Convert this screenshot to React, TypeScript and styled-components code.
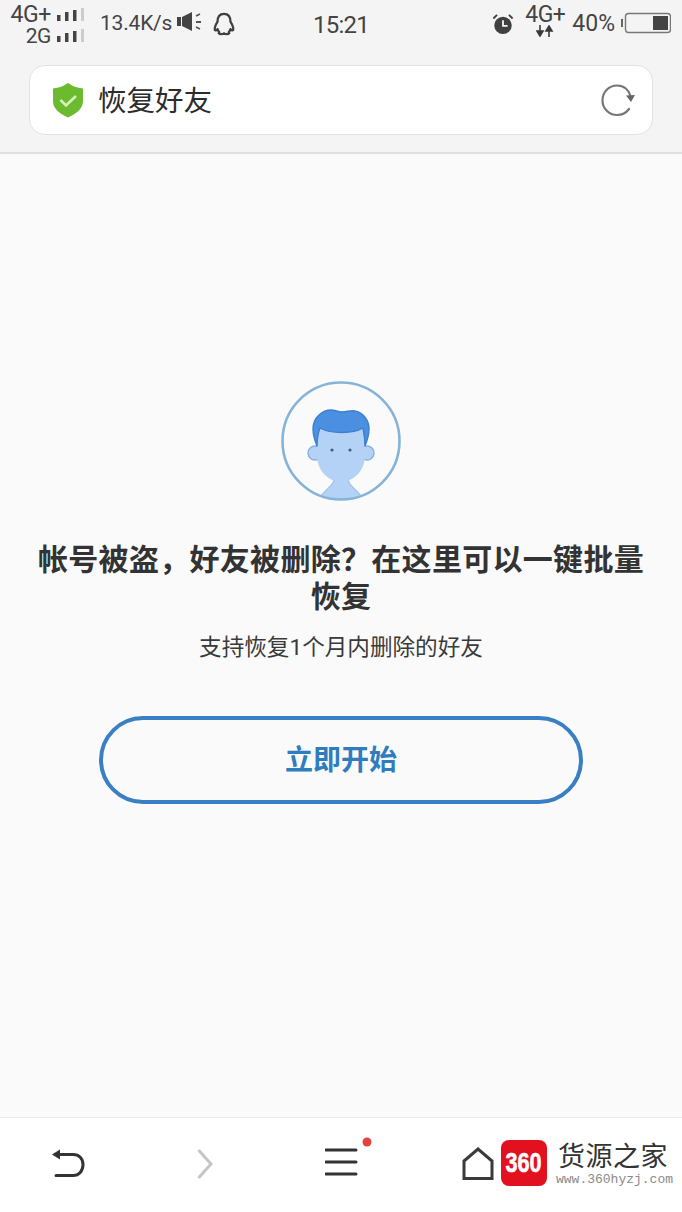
import React from 'react';
import styled, { createGlobalStyle } from 'styled-components';

const GlobalStyle = createGlobalStyle`
  html, body { margin: 0; padding: 0; background: #fafafa; }
  body { font-family: "Roboto", "Noto Sans CJK SC", sans-serif; }
`;

const Page = styled.div`
  position: relative;
  width: 682px;
  height: 1212px;
  display: flex;
  flex-direction: column;
  overflow: hidden;
  background: #fafafa;
`;

const Header = styled.header`
  height: 154px;
  box-sizing: border-box;
  background: #f4f4f4;
  border-bottom: 2px solid #dfdfdf;
  display: flex;
  flex-direction: column;
`;

const StatusBar = styled.div`
  height: 65px;
  box-sizing: border-box;
  padding: 4px 11px 0 11px;
  display: grid;
  grid-template-columns: 1fr auto 1fr;
  align-items: start;
  color: #444;
`;

const StatusLeft = styled.div`
  display: flex;
  align-items: flex-start;
`;

const StatusRight = styled.div`
  display: flex;
  align-items: flex-start;
  justify-content: flex-end;
`;

const SignalStack = styled.div`
  width: 73px;
  display: flex;
  flex-direction: column;
  align-items: flex-end;
`;

const SignalRow = styled.div<{ $size: number }>`
  height: 21.5px;
  display: flex;
  align-items: center;
  gap: 6px;
  font-size: ${(p) => p.$size}px;
  line-height: 22px;
  letter-spacing: -0.4px;
`;

const Speed = styled.span`
  margin-left: 16px;
  margin-top: 6px;
  font-size: 21px;
  line-height: 26px;
  letter-spacing: -0.2px;
`;

const Clock = styled.span`
  margin-top: 7px;
  font-size: 24px;
  line-height: 28px;
  letter-spacing: -0.8px;
`;

const NetworkBlock = styled.div`
  width: 42px;
  margin: 0 6px 0 10px;
  display: flex;
  flex-direction: column;
  align-items: center;
  font-size: 23px;
  line-height: 21px;
  letter-spacing: -0.5px;
  white-space: nowrap;
`;

const Percent = styled.span`
  margin-top: 7px;
  font-size: 23px;
  line-height: 26px;
`;

const AddressBar = styled.div`
  margin: 0 29px;
  height: 70px;
  box-sizing: border-box;
  padding: 0 17px 0 22px;
  background: #fff;
  border: 1px solid #e2e2e2;
  border-radius: 16px;
  display: flex;
  align-items: center;
`;

const AddressTitle = styled.span`
  flex: 1;
  margin: 3px 0 0 14px;
  font-size: 28.5px;
  color: #2c2c2c;
  line-height: 36px;
`;

const Main = styled.main`
  flex: 1;
  padding-top: 227px;
  display: flex;
  flex-direction: column;
  align-items: center;
`;

const Heading = styled.h1`
  width: 620px;
  margin: 40px 0 0;
  text-align: center;
  font-size: 30px;
  line-height: 37px;
  font-weight: 700;
  letter-spacing: 0.3px;
  color: #333;
`;

const SubText = styled.p`
  margin: 18px 0 0;
  font-size: 22.6px;
  line-height: 30px;
  color: #3a3a3a;
`;

const StartButton = styled.button`
  width: 484px;
  height: 88px;
  margin-top: 53px;
  padding: 0 0 4px;
  box-sizing: border-box;
  background: transparent;
  border: 4px solid #3a7fc4;
  border-radius: 44px;
  color: #2f7dbf;
  font-family: inherit;
  font-size: 28px;
  font-weight: 700;
`;

const BottomBar = styled.nav`
  height: 95px;
  box-sizing: border-box;
  background: #fff;
  border-top: 1px solid #ececec;
  padding: 0 0 0 51px;
  display: flex;
  align-items: center;
`;

const NavSlot = styled.span<{ $w: number }>`
  width: ${(p) => p.$w}px;
  flex: none;
  display: flex;
  align-items: center;
  padding-bottom: 2px;
`;

const Watermark = styled.div`
  position: absolute;
  left: 501px;
  top: 1140px;
  display: flex;
  align-items: flex-start;
`;

const Badge = styled.div`
  width: 46px;
  height: 46px;
  border-radius: 8px;
  background: #e3101f;
  color: #fff;
  display: flex;
  align-items: center;
  justify-content: center;
`;

const BadgeDigits = styled.span`
  font-family: "Liberation Sans", sans-serif;
  font-weight: 700;
  font-size: 27px;
  line-height: 46px;
  transform: scaleX(0.8);
  -webkit-text-stroke: 0.6px #fff;
`;

const BrandText = styled.div`
  margin-left: 11px;
  display: flex;
  flex-direction: column;
`;

const BrandName = styled.span`
  font-family: "Noto Sans CJK SC", sans-serif;
  font-size: 27px;
  line-height: 30px;
  letter-spacing: 0.5px;
  color: #333;
`;

const BrandUrl = styled.span`
  margin: 2px 0 0 -2px;
  font-family: "Liberation Mono", monospace;
  font-size: 13px;
  line-height: 16px;
  color: #8a8a8a;
`;

const Bars = () => (
  <svg width="27" height="22" viewBox="0 0 27 22">
    <rect x="0" y="11" width="3.5" height="6" fill="#444" />
    <rect x="8" y="8" width="3.5" height="9" fill="#444" />
    <rect x="16" y="6" width="3.5" height="11" fill="#444" />
    <rect x="24" y="4" width="3" height="13" fill="#ccc" />
  </svg>
);

const Speaker = () => (
  <svg width="24" height="22" viewBox="0 0 24 22" style={{ marginTop: 7, marginLeft: 5 }}>
    <rect x="0" y="6" width="4" height="9" fill="#444" />
    <path d="M5 6 L15 1 V20 L5 15 Z" fill="#444" />
    <path d="M19 5 L23 3 M19 11 H24 M19 16 L23 18" stroke="#555" strokeWidth="1.8" />
  </svg>
);

const Penguin = () => (
  <svg width="24" height="26" viewBox="0 0 26 26" fill="none" style={{ marginTop: 7, marginLeft: 11 }}>
    <path
      d="M13 2 C7.5 2 6 6.5 6 10.5 C4.5 13 2.5 16 3 19.5 C4 20.5 5.5 19.5 6 18.5 C6.5 20 7 21 8 22 C6.5 23 7.5 24 10 24 C11.5 24 12.5 23.5 13 23 C13.5 23.5 14.5 24 16 24 C18.5 24 19.5 23 18 22 C19 21 19.5 20 20 18.5 C20.5 19.5 22 20.5 23 19.5 C23.5 16 21.5 13 20 10.5 C20 6.5 18.5 2 13 2 Z"
      stroke="#3f3f3f"
      strokeWidth="2.4"
      strokeLinejoin="round"
    />
  </svg>
);

const Alarm = () => (
  <svg width="22" height="22" viewBox="0 0 24 24" style={{ marginTop: 9 }}>
    <circle cx="12" cy="13.5" r="9.5" fill="#404040" />
    <path d="M12 8 V14 H17" stroke="#f4f4f4" strokeWidth="2" fill="none" />
    <path d="M1.5 6 L5.5 2 M22.5 6 L18.5 2" stroke="#404040" strokeWidth="2" />
  </svg>
);

const DataArrows = () => (
  <svg width="18" height="12" viewBox="0 0 18 12">
    <path d="M4 0 V7 M1 6 L4 11 L7 6 Z" stroke="#3a3a3a" strokeWidth="1.6" fill="#3a3a3a" />
    <path d="M13 12 V5 M10 6 L13 1 L16 6 Z" stroke="#3a3a3a" strokeWidth="1.6" fill="#3a3a3a" />
  </svg>
);

const Battery = () => (
  <svg width="50" height="22" viewBox="0 0 50 22" style={{ marginTop: 8, marginLeft: 6 }}>
    <rect x="0" y="7" width="2" height="8" fill="#666" />
    <rect x="4.5" y="1.5" width="45" height="19" rx="3" fill="none" stroke="#777" strokeWidth="1.4" />
    <rect x="32" y="4" width="15" height="14" fill="#444" />
  </svg>
);

const Shield = () => (
  <svg width="32" height="36" viewBox="0 0 32 36" style={{ flex: 'none' }}>
    <path
      d="M16 1 C20 4 25 6 31 6.5 V19 C31 27 24 32 16 35.5 C8 32 1 27 1 19 V6.5 C7 6 12 4 16 1 Z"
      fill="#6cbb2e"
    />
    <path d="M8.5 18 L14 23.5 L24 14" stroke="#d5f0bd" strokeWidth="2.6" fill="none" />
  </svg>
);

const Refresh = () => (
  <svg width="34" height="34" viewBox="0 0 34 34" fill="none" style={{ flex: 'none', marginTop: 1 }}>
    <path
      d="M28 25 C25 29 21 31 16 31 C8 31 1.5 24.5 1.5 16.5 C1.5 8 8 1.5 16 1.5 C23 1.5 28 6 29.5 12"
      stroke="#777"
      strokeWidth="2.2"
      strokeLinecap="round"
    />
    <path d="M25 11.5 L34 11 L30 18 Z" fill="#666" />
  </svg>
);

const Avatar = () => (
  <svg width="120" height="120" viewBox="0 0 120 120" fill="none">
    <defs>
      <clipPath id="avatarClip">
        <circle cx="60" cy="60" r="58" />
      </clipPath>
    </defs>
    <g clipPath="url(#avatarClip)">
      <path
        d="M53 94 C55 105 44 107 38 118 H82 C76 107 65 105 67 94 Z"
        fill="#b4d2f5"
        stroke="#9cc0ec"
        strokeWidth="1.2"
      />
    </g>
    <circle cx="34" cy="72" r="7" fill="#b4d2f5" stroke="#84b2e6" strokeWidth="1.4" />
    <circle cx="86" cy="72" r="7" fill="#b4d2f5" stroke="#84b2e6" strokeWidth="1.4" />
    <path
      d="M36 45 V74 C36 92 50 101 60 101 C70 101 84 92 84 74 V45 Z"
      fill="#b4d2f5"
    />
    <path
      d="M36 65 C34 60 32 54 32 48 C32 36 42 29 50 29 C54 29 57 31 61 31 C66 31 70 29 74 30 C83 32 88 40 88 48 C88 54 86 60 84 65 C84 58 83 52 82 47 C72 53 50 53 39 47 C37 52 36 58 36 65 Z"
      fill="#4a8fe0"
      stroke="#3e7fcf"
      strokeWidth="1.4"
      strokeLinejoin="round"
    />
    <circle cx="51" cy="69" r="1.6" fill="#3a5f8f" />
    <circle cx="69" cy="69" r="1.6" fill="#3a5f8f" />
    <circle cx="60" cy="60" r="58.5" stroke="#86b3d8" strokeWidth="2.6" />
  </svg>
);

const BackIcon = () => (
  <svg width="34" height="30" viewBox="0 0 34 30" fill="none">
    <path d="M5 5.5 H22 C28 5.5 32 9.5 32 15.5 C32 22 28 26.5 22 26.5 H5" stroke="#333" strokeWidth="3" strokeLinecap="round" />
    <path d="M1 5.5 L9 0.5 V10.5 Z" fill="#333" />
  </svg>
);

const ForwardIcon = () => (
  <svg width="16" height="32" viewBox="0 0 16 32" fill="none">
    <path d="M1.5 2 L14 16 L1.5 30" stroke="#c6c6c6" strokeWidth="3" />
  </svg>
);

const MenuIcon = () => (
  <svg width="50" height="44" viewBox="0 0 50 44" fill="none" style={{ marginTop: -14 }}>
    <path d="M1 15 H31 M1 27 H31 M1 39 H31" stroke="#333" strokeWidth="3" strokeLinecap="round" />
    <circle cx="42" cy="7" r="4.5" fill="#e5423f" />
  </svg>
);

const HomeIcon = () => (
  <svg width="32" height="34" viewBox="0 0 32 34" fill="none">
    <path d="M2 31.5 V14 L16 2 L30 14 V31.5 Z" stroke="#3a3a3a" strokeWidth="3" strokeLinejoin="miter" />
  </svg>
);

export default function App() {
  return (
    <Page>
      <GlobalStyle />
      <Header>
        <StatusBar>
          <StatusLeft>
            <SignalStack>
              <SignalRow $size={23}>
                4G+
                <Bars />
              </SignalRow>
              <SignalRow $size={21}>
                2G
                <Bars />
              </SignalRow>
            </SignalStack>
            <Speed>13.4K/s</Speed>
            <Speaker />
            <Penguin />
          </StatusLeft>
          <Clock>15:21</Clock>
          <StatusRight>
            <Alarm />
            <NetworkBlock>
              4G+
              <DataArrows />
            </NetworkBlock>
            <Percent>40%</Percent>
            <Battery />
          </StatusRight>
        </StatusBar>
        <AddressBar>
          <Shield />
          <AddressTitle>恢复好友</AddressTitle>
          <Refresh />
        </AddressBar>
      </Header>
      <Main>
        <Avatar />
        <Heading>帐号被盗，好友被删除？在这里可以一键批量恢复</Heading>
        <SubText>支持恢复1个月内删除的好友</SubText>
        <StartButton>立即开始</StartButton>
      </Main>
      <BottomBar>
        <NavSlot $w={146}>
          <BackIcon />
        </NavSlot>
        <NavSlot $w={128}>
          <ForwardIcon />
        </NavSlot>
        <NavSlot $w={137}>
          <MenuIcon />
        </NavSlot>
        <NavSlot $w={40}>
          <HomeIcon />
        </NavSlot>
      </BottomBar>
      <Watermark>
        <Badge>
          <BadgeDigits>360</BadgeDigits>
        </Badge>
        <BrandText>
          <BrandName>货源之家</BrandName>
          <BrandUrl>www.360hyzj.com</BrandUrl>
        </BrandText>
      </Watermark>
    </Page>
  );
}
